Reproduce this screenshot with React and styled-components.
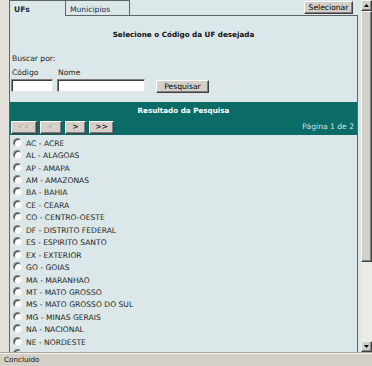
import styled, { createGlobalStyle } from 'styled-components';

const GlobalStyle = createGlobalStyle`
  html, body {
    margin: 0;
    padding: 0;
  }
  body {
    width: 372px;
    height: 366px;
    overflow: hidden;
    font-family: "DejaVu Sans", Verdana, sans-serif;
    font-size: 7.6px;
    color: #000;
  }
`;

const Window = styled.div`
  display: flex;
  flex-direction: column;
  width: 372px;
  height: 366px;
  background: #d4d0c8;
`;

const Viewport = styled.div`
  display: flex;
  height: 352px;
  overflow: hidden;
`;

const Page = styled.div`
  flex: 1;
  display: flex;
  flex-direction: column;
  min-width: 0;
  background: #dbe7e8;
  border-left: 9px solid #e3e1da;
  padding-right: 3px;
  overflow: hidden;
`;

const TabRow = styled.div`
  display: flex;
  height: 16px;
  flex-shrink: 0;
`;

const Tab = styled.div`
  box-sizing: border-box;
  width: ${(p) => p.$width}px;
  height: 16px;
  padding: 4px 0 0 4px;
  border: 1px solid #5f6466;
  border-left: ${(p) => (p.$first ? '1px solid #5f6466' : 'none')};
  border-bottom: ${(p) => (p.$active ? 'none' : '1px solid #5f6466')};
  font-weight: ${(p) => (p.$active ? 'bold' : 'normal')};
  color: ${(p) => (p.$active ? '#1a2a3a' : '#1c3050')};
  line-height: 10px;
`;

const TabFill = styled.div`
  flex: 1;
  display: flex;
  justify-content: flex-end;
  align-items: flex-start;
  padding: 1px 5px 0 0;
  border-bottom: 1px solid #5f6466;
`;

const Button = styled.button`
  box-sizing: border-box;
  height: ${(p) => p.$h || 13}px;
  width: ${(p) => p.$w}px;
  padding: 0;
  margin: 0;
  font-family: "DejaVu Sans", Verdana, sans-serif;
  font-size: 7.6px;
  line-height: 10px;
  color: ${(p) => (p.disabled ? '#aaa69e' : '#000')};
  text-shadow: ${(p) => (p.disabled ? '1px 1px 0 #f4f3ef' : 'none')};
  background: #d4d0c8;
  border: 1px solid;
  border-color: #ffffff #404040 #404040 #ffffff;
  box-shadow: inset -1px -1px 0 #808080;
`;

const Panel = styled.div`
  flex: 1;
  display: flex;
  flex-direction: column;
  border-left: 1px solid #5f6466;
  border-right: 1px solid #5f6466;
`;

const Title = styled.div`
  margin-top: 14px;
  text-align: center;
  font-weight: bold;
  font-size: 7.2px;
  line-height: 10px;
  color: #111;
`;

const Search = styled.div`
  display: flex;
  flex-direction: column;
  padding: 0 0 0 1px;
`;

const Caption = styled.div`
  margin: 14px 0 0 1px;
  line-height: 10px;
  color: #222;
`;

const Fields = styled.div`
  display: grid;
  grid-template-columns: 42px 88px auto;
  column-gap: 4px;
  align-items: end;
  margin-top: 4px;
`;

const Field = styled.label`
  display: flex;
  flex-direction: column;
  gap: 1px;
  line-height: 10px;
  color: #222;
  & > span {
    padding-left: 1px;
  }
`;

const Input = styled.input`
  box-sizing: border-box;
  width: 100%;
  height: 13px;
  margin: 0;
  padding: 0 2px;
  font-size: 7.6px;
  background: #fff;
  border: 1px solid;
  border-color: #808080 #e8e8e8 #e8e8e8 #808080;
  box-shadow: inset 1px 1px 0 #404040;
  outline: none;
`;

const SearchButton = styled(Button)`
  margin: 0 0 -1px 7px;
`;

const Results = styled.div`
  margin-top: 10px;
  background: #0a6b67;
  color: #fff;
`;

const ResultsHeader = styled.div`
  height: 17px;
  line-height: 17px;
  text-align: center;
  font-weight: bold;
  font-size: 7.2px;
`;

const NavRow = styled.div`
  display: flex;
  align-items: center;
  gap: 3px;
  height: 16px;
  padding: 0 3px 0 1px;
`;

const PageInfo = styled.div`
  margin-left: auto;
  color: #d6e6e6;
  line-height: 10px;
`;

const List = styled.div`
  display: flex;
  flex-direction: column;
  padding: 2px 0 0 3px;
`;

const Option = styled.label`
  display: flex;
  align-items: center;
  gap: 4px;
  height: 12.45px;
  color: #1f1f1f;
  white-space: nowrap;
`;

const Radio = styled.span`
  box-sizing: border-box;
  width: 9px;
  height: 9px;
  margin-top: -2px;
  border-radius: 50%;
  background: #fff;
  border: 1px solid;
  border-color: #808080 #f0f0f0 #f0f0f0 #808080;
  box-shadow: inset 1px 1px 0 #404040;
`;

const ScrollBar = styled.div`
  display: flex;
  flex-direction: column;
  width: 11px;
  flex-shrink: 0;
  background: #ecebe5;
`;

const ScrollArrow = styled.div`
  box-sizing: border-box;
  height: 11px;
  display: flex;
  align-items: center;
  justify-content: center;
  background: #d4d0c8;
  border: 1px solid;
  border-color: #f4f3ef #404040 #404040 #f4f3ef;
  box-shadow: inset -1px -1px 0 #808080;
`;

const Thumb = styled.div`
  box-sizing: border-box;
  height: 251px;
  background: #d4d0c8;
  border: 1px solid;
  border-color: #f4f3ef #404040 #404040 #f4f3ef;
  box-shadow: inset -1px -1px 0 #808080;
`;

const Track = styled.div`
  flex: 1;
`;

const StatusBar = styled.div`
  box-sizing: border-box;
  height: 14px;
  padding: 0 4px;
  border-top: 1px solid #a9a59d;
  box-shadow: inset 0 1px 0 #f2f1ec;
  line-height: 13px;
  font-size: 7.2px;
  color: #111;
`;

const ufs = [
  'AC - ACRE',
  'AL - ALAGOAS',
  'AP - AMAPA',
  'AM - AMAZONAS',
  'BA - BAHIA',
  'CE - CEARA',
  'CO - CENTRO-OESTE',
  'DF - DISTRITO FEDERAL',
  'ES - ESPIRITO SANTO',
  'EX - EXTERIOR',
  'GO - GOIAS',
  'MA - MARANHAO',
  'MT - MATO GROSSO',
  'MS - MATO GROSSO DO SUL',
  'MG - MINAS GERAIS',
  'NA - NACIONAL',
  'NE - NORDESTE',
];

function Arrow({ up }) {
  return (
    <svg width="5" height="3" viewBox="0 0 5 3">
      <polygon points={up ? '2.5,0 5,3 0,3' : '0,0 5,0 2.5,3'} fill="#000" />
    </svg>
  );
}

export default function App() {
  return (
    <>
      <GlobalStyle />
      <Window>
        <Viewport>
          <Page>
            <TabRow>
              <Tab $width={57} $first $active>
                UFs
              </Tab>
              <Tab $width={64}>Municipios</Tab>
              <TabFill>
                <Button $w={49} $h={13}>
                  Selecionar
                </Button>
              </TabFill>
            </TabRow>
            <Panel>
              <Title>Selecione o Código da UF desejada</Title>
              <Search>
                <Caption>Buscar por:</Caption>
                <Fields>
                  <Field>
                    <span>Código</span>
                    <Input type="text" />
                  </Field>
                  <Field>
                    <span>Nome</span>
                    <Input type="text" />
                  </Field>
                  <SearchButton $w={53} type="button">
                    Pesquisar
                  </SearchButton>
                </Fields>
              </Search>
              <Results>
                <ResultsHeader>Resultado da Pesquisa</ResultsHeader>
                <NavRow>
                  <Button $w={26} $h={13} disabled>
                    {'<<'}
                  </Button>
                  <Button $w={22} $h={13} disabled>
                    {'<'}
                  </Button>
                  <Button $w={21} $h={13}>
                    {'>'}
                  </Button>
                  <Button $w={25} $h={13}>
                    {'>>'}
                  </Button>
                  <PageInfo>Página 1 de 2</PageInfo>
                </NavRow>
              </Results>
              <List>
                {ufs.map((uf) => (
                  <Option key={uf}>
                    <Radio />
                    {uf}
                  </Option>
                ))}
                <Option>
                  <Radio />
                </Option>
              </List>
            </Panel>
          </Page>
          <ScrollBar>
            <ScrollArrow>
              <Arrow up />
            </ScrollArrow>
            <Thumb />
            <Track />
            <ScrollArrow>
              <Arrow />
            </ScrollArrow>
          </ScrollBar>
        </Viewport>
        <StatusBar>Concluido</StatusBar>
      </Window>
    </>
  );
}
